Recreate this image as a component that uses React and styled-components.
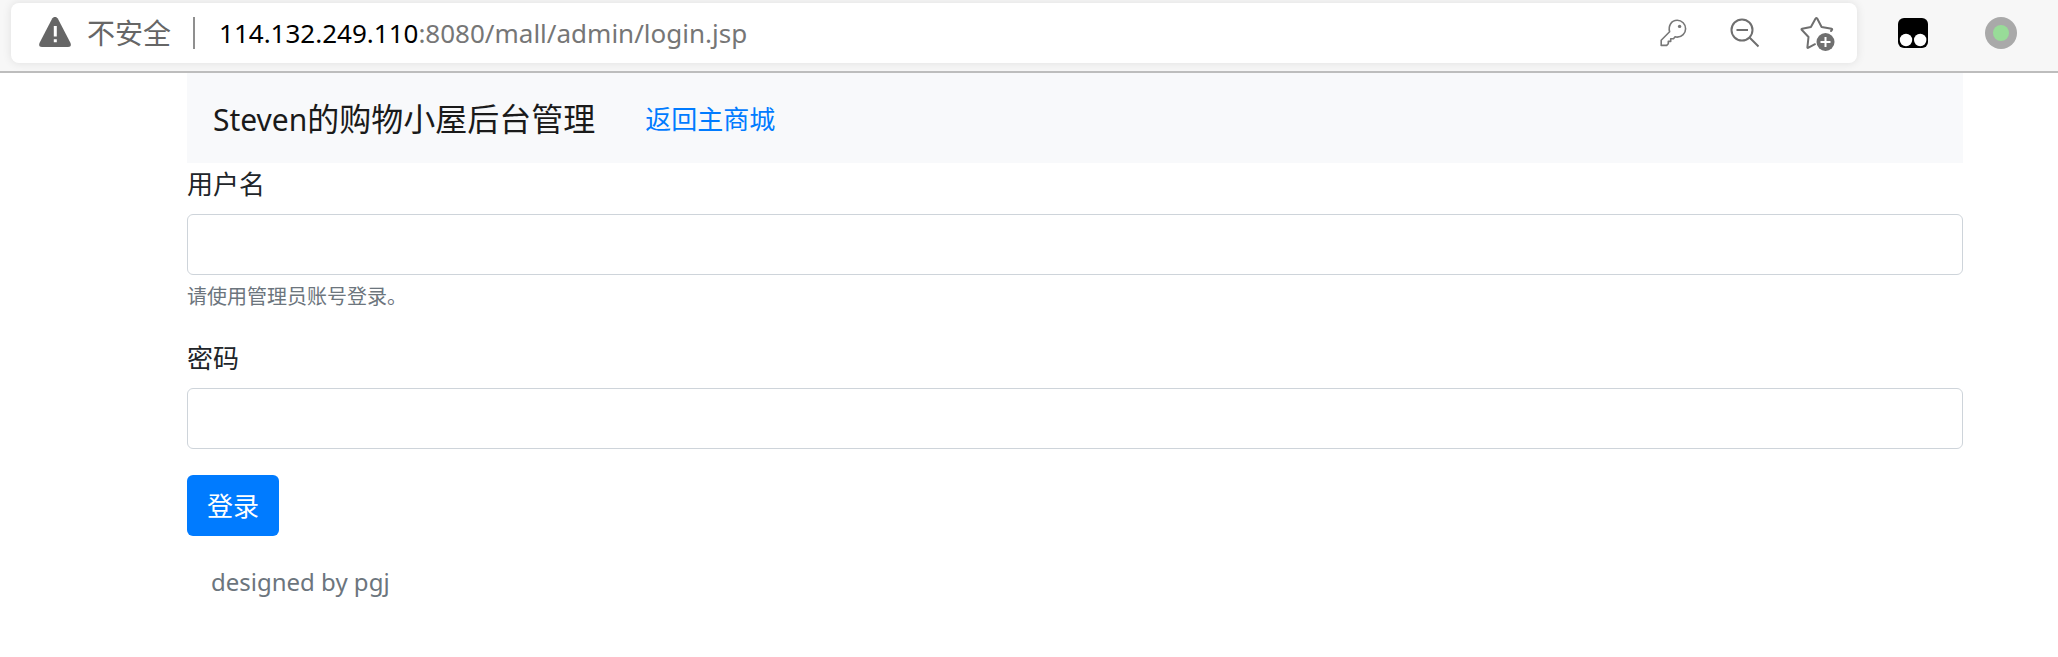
import React from "react";
import styled, { createGlobalStyle } from "styled-components";

const GlobalStyle = createGlobalStyle`
  *, *::before, *::after { box-sizing: border-box; }
  body {
    margin: 0;
    background: #fff;
    color: #212529;
    font-family: "Noto Sans", "Noto Sans CJK SC", sans-serif;
    font-size: 26px;
    line-height: 38px;
  }
`;

const Toolbar = styled.div`
  display: flex;
  align-items: center;
  padding: 3px 41px 8px 11px;
  background: #f7f7f7;
  border-bottom: 2px solid #bdbdbd;
`;

const AddressBar = styled.div`
  flex: 1;
  display: flex;
  align-items: center;
  height: 60px;
  padding: 0 21px 0 27px;
  background: #fff;
  border-radius: 8px;
  box-shadow: 0 0 10px rgba(0, 0, 0, 0.1);
`;

const SecurityLabel = styled.span`
  margin-left: 15px;
  padding-right: 22px;
  border-right: 2px solid #8f8f8f;
  color: #666;
  font-size: 28px;
  line-height: 32px;
`;

const Url = styled.span`
  flex: 1;
  margin-left: 24px;
  color: #767676;
  white-space: nowrap;
`;

const Host = styled.span`
  color: #000;
`;

const AddressActions = styled.div`
  display: flex;
  align-items: center;
  gap: 41px;
`;

const Extensions = styled.div`
  display: flex;
  align-items: center;
  gap: 57px;
  margin-left: 41px;
`;

const IconButton = styled.button`
  display: flex;
  padding: 0;
  border: 0;
  background: none;
  cursor: pointer;
`;

const Page = styled.main`
  padding: 0 95px 0 187px;
`;

const Navbar = styled.nav`
  display: flex;
  align-items: center;
  gap: 50px;
  height: 90px;
  padding: 2px 26px 0;
  background: #f8f9fb;
`;

const Brand = styled.span`
  color: #1a1a1a;
  font-size: 32px;
  line-height: 48px;
`;

const BrandName = styled.span`
  font-size: 30px;
`;

const NavLink = styled.a`
  color: #007bff;
  text-decoration: none;
`;

const Field = styled.div`
  display: flex;
  flex-direction: column;
  margin-bottom: 26px;
`;

const Label = styled.label`
  margin: 2px 0 11px;
`;

const Input = styled.input`
  width: 100%;
  height: 61px;
  padding: 10px 19px;
  border: 1px solid #ced4da;
  border-radius: 6px;
  background: #fff;
  color: #495057;
  font: inherit;
`;

const Hint = styled.small`
  margin-top: 8px;
  color: #6c757d;
  font-size: 20px;
  line-height: 28px;
`;

const SubmitButton = styled.button`
  height: 61px;
  padding: 0 20px;
  border: 0;
  border-radius: 6px;
  background: #007bff;
  color: #fff;
  font: inherit;
  cursor: pointer;
`;

const Footer = styled.footer`
  padding: 27px 24px;
  color: #6c757d;
  font-size: 24px;
`;

const WarningIcon = () => (
  <svg width="34" height="32" viewBox="0 0 34 32" aria-hidden="true">
    <path d="M14.2 1.500q2.800-3.200 5.600 0L32.500 26q1.400 4-2.500 4H4q-3.900 0-2.500-4z" fill="#666" />
    <path d="M17.300 9v10.500M17.300 22.200v3" stroke="#fff" strokeWidth="3" />
  </svg>
);

const KeyIcon = () => (
  <svg width="28" height="28" viewBox="0 0 28 28" fill="none" stroke="#777" strokeWidth="1.6" strokeLinejoin="round">
    <path d="M9.600 12.800C8 6.500 11.500 1.300 17.200 1.300a8.400 8.400 0 0 1 0 16.800q-1.200 0-2.100-.3l-1.600 1.900h-2.800v2.700H8.300v2.400l-1.600 1.600H1.200v-5.200z" />
    <circle cx="19.600" cy="7.400" r="1.700" fill="#777" stroke="none" />
  </svg>
);

const ZoomOutIcon = () => (
  <svg width="30" height="30" viewBox="0 0 30 30" fill="none" stroke="#6f6f6f" strokeWidth="2">
    <circle cx="13" cy="12" r="10.500" />
    <path d="M7.500 12h11.500M20.500 19.500l9 9" />
  </svg>
);

const StarIcon = () => (
  <svg width="36" height="36" viewBox="0 0 36 36" fill="none" stroke="#6f6f6f" strokeWidth="2" strokeLinejoin="round" strokeLinecap="round">
    <path d="M15 29.200l-7 3.600q-.7.300-.6-.5L8.500 22 1.700 14.800q-.6-.8.400-1.100l8.800-1.700 4.700-8.500q.8-1 1.600 0l4.400 8.500 10 1.800q1 .3.300 1.200l-.9 1" />
    <circle cx="25.500" cy="27" r="9" fill="#6f6f6f" stroke="none" />
    <path d="M25.500 22v10M20.500 27h10" stroke="#fff" strokeLinecap="butt" />
  </svg>
);

const ExtensionIcon = () => (
  <svg width="30" height="30" viewBox="0 0 30 30">
    <rect width="30" height="30" rx="6" fill="#000" />
    <circle cx="8" cy="22" r="6.200" fill="#fff" />
    <circle cx="22.200" cy="22" r="6.200" fill="#fff" />
  </svg>
);

const StatusIcon = () => (
  <svg width="32" height="32" viewBox="0 0 32 32">
    <circle cx="16" cy="16" r="16" fill="#a9a9a9" />
    <circle cx="16" cy="16" r="8" fill="#98dc98" />
  </svg>
);

export default function App() {
  return (
    <>
      <GlobalStyle />
      <Toolbar>
        <AddressBar>
          <WarningIcon />
          <SecurityLabel>不安全</SecurityLabel>
          <Url><Host>114.132.249.110</Host>:8080/mall/admin/login.jsp</Url>
          <AddressActions>
            <IconButton aria-label="密码"><KeyIcon /></IconButton>
            <IconButton aria-label="缩小"><ZoomOutIcon /></IconButton>
            <IconButton aria-label="收藏"><StarIcon /></IconButton>
          </AddressActions>
        </AddressBar>
        <Extensions>
          <IconButton aria-label="扩展"><ExtensionIcon /></IconButton>
          <IconButton aria-label="状态"><StatusIcon /></IconButton>
        </Extensions>
      </Toolbar>
      <Page>
        <Navbar>
          <Brand><BrandName>Steven</BrandName>的购物小屋后台管理</Brand>
          <NavLink href="#">返回主商城</NavLink>
        </Navbar>
        <form onSubmit={(e) => e.preventDefault()}>
          <Field>
            <Label htmlFor="username">用户名</Label>
            <Input id="username" type="text" aria-describedby="username-hint" />
            <Hint id="username-hint">请使用管理员账号登录。</Hint>
          </Field>
          <Field>
            <Label htmlFor="password">密码</Label>
            <Input id="password" type="password" />
          </Field>
          <SubmitButton type="submit">登录</SubmitButton>
        </form>
        <Footer>designed by pgj</Footer>
      </Page>
    </>
  );
}
